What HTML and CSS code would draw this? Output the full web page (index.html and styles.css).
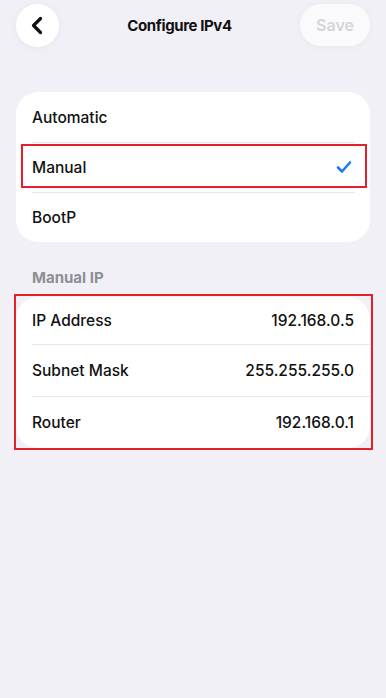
FILE: index.html
```html
<!DOCTYPE html>
<html>
<head>
	<title>Configure IPv4</title>
	<link rel="stylesheet" href="styles.css">
</head>
<body>
	<div class="topbar">
		<button class="back-btn" aria-label="Back">
			<svg width="14" height="19" viewBox="0 0 14 19"><path d="M10.5 2.5 L3.5 9.5 L10.5 16.5" fill="none" stroke="#111" stroke-width="3.2" stroke-linecap="round" stroke-linejoin="round"/></svg>
		</button>
		<h1 class="title">Configure IPv4</h1>
		<button class="save-btn">Save</button>
	</div>

	<div class="card modes">
		<div class="row">Automatic</div>
		<div class="row selected marked">
			<span>Manual</span>
			<svg class="check" width="16" height="14" viewBox="0 0 16 14"><path d="M2 7.5 L6 11.5 L14 2.5" fill="none" stroke="#1a7cf5" stroke-width="2.6" stroke-linecap="round" stroke-linejoin="round"/></svg>
		</div>
		<div class="row">BootP</div>
	</div>

	<div class="section-label">Manual IP</div>
	<div class="card fields marked-card">
		<div class="row"><span>IP Address</span><span class="value">192.168.0.5</span></div>
		<div class="row"><span>Subnet Mask</span><span class="value">255.255.255.0</span></div>
		<div class="row"><span>Router</span><span class="value">192.168.0.1</span></div>
	</div>
</body>
</html>
```

FILE: styles.css
```css
body {
	margin: 0;
	background-color: #f1f0f6;
	font-family: Inter, "Noto Sans", sans-serif;
	color: #111;
	height: 698px;
}
.topbar {
	display: flex;
	align-items: center;
	justify-content: space-between;
	padding: 3px 16px 0 16px;
	height: 47px;
	box-sizing: border-box;
}
.back-btn {
	width: 43px;
	height: 43px;
	border-radius: 50%;
	border: none;
	background-color: #fff;
	box-shadow: 0 1px 8px rgba(0, 0, 0, 0.05);
	display: flex;
	align-items: center;
	justify-content: center;
	padding: 0;
	padding-right: 2px;
}
.title {
	margin: 0;
	font-size: 15px;
	font-weight: 700;
	letter-spacing: -0.4px;
}
.save-btn {
	width: 70px;
	height: 42px;
	border-radius: 21px;
	border: none;
	background-color: #fafafd;
	box-shadow: 0 1px 8px rgba(0, 0, 0, 0.04);
	color: #d4d4d9;
	font-family: Inter, sans-serif;
	font-size: 16px;
	font-weight: 600;
}
.card {
	margin: 0 16px;
	background-color: #fff;
	border-radius: 22px;
	position: relative;
}
.modes {
	margin-top: 45px;
}
.row {
	height: 50px;
	display: flex;
	align-items: center;
	justify-content: space-between;
	padding: 0 16px;
	font-size: 15.5px;
	font-weight: 500;
	position: relative;
}
.row + .row::before {
	content: "";
	position: absolute;
	top: 0;
	left: 16px;
	right: 0;
	border-top: 1px solid #e8e7ec;
}
.modes .row + .row::before {
	right: 15px;
}
.fields .row:first-child {
	height: 47px;
	padding-top: 0;
}
.fields .row + .row {
	height: 52px;
}
.check {
	margin-right: 2px;
}
.marked::after {
	content: "";
	position: absolute;
	top: 2px;
	right: 3px;
	bottom: 4px;
	left: 5px;
	border: 2px solid #e4212b;
}
.section-label {
	margin: 27px 0 10px 32px;
	font-size: 15px;
	font-weight: 700;
	color: #8e8e93;
	line-height: 18px;
}
.marked-card::after {
	content: "";
	position: absolute;
	top: -3px;
	right: -3px;
	bottom: -2px;
	left: -2px;
	border: 2px solid #e4212b;
}
.value {
	font-weight: 500;
}
```
